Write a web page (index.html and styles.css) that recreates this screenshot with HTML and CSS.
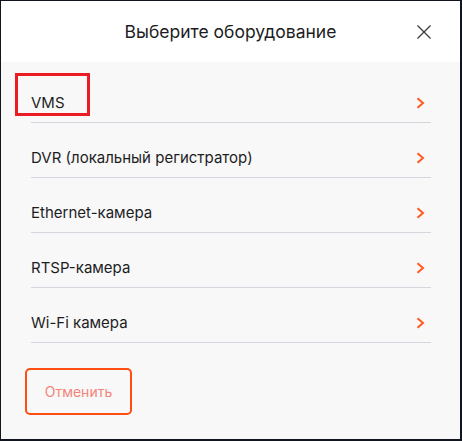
FILE: index.html
```html
<!DOCTYPE html>
<html lang="ru">
<head>
<meta charset="utf-8">
<title>Выберите оборудование</title>
<link rel="stylesheet" href="styles.css">
</head>
<body>
<div class="window">
  <header class="header">
    <span></span>
    <h1 class="title">Выберите оборудование</h1>
    <button class="close" aria-label="Закрыть">
      <svg width="14" height="14" viewBox="0 0 14 14"><path d="M0.5 0.5 L13.5 13.5 M13.5 0.5 L0.5 13.5" stroke="#3a3a3a" stroke-width="1.3" fill="none"/></svg>
    </button>
  </header>
  <main class="content">
    <ul class="list">
      <li class="row"><span class="label highlighted">VMS</span><svg class="chev" width="9" height="12" viewBox="0 0 9 12"><path d="M1.5 1.2 L7 6 L1.5 10.8" stroke="#ff5a1f" stroke-width="2" fill="none"/></svg></li>
      <li class="row"><span class="label">DVR (локальный регистратор)</span><svg class="chev" width="9" height="12" viewBox="0 0 9 12"><path d="M1.5 1.2 L7 6 L1.5 10.8" stroke="#ff5a1f" stroke-width="2" fill="none"/></svg></li>
      <li class="row"><span class="label">Ethernet-камера</span><svg class="chev" width="9" height="12" viewBox="0 0 9 12"><path d="M1.5 1.2 L7 6 L1.5 10.8" stroke="#ff5a1f" stroke-width="2" fill="none"/></svg></li>
      <li class="row"><span class="label">RTSP-камера</span><svg class="chev" width="9" height="12" viewBox="0 0 9 12"><path d="M1.5 1.2 L7 6 L1.5 10.8" stroke="#ff5a1f" stroke-width="2" fill="none"/></svg></li>
      <li class="row"><span class="label">Wi-Fi камера</span><svg class="chev" width="9" height="12" viewBox="0 0 9 12"><path d="M1.5 1.2 L7 6 L1.5 10.8" stroke="#ff5a1f" stroke-width="2" fill="none"/></svg></li>
    </ul>
    <div class="footer">
      <button class="cancel">Отменить</button>
    </div>
  </main>
</div>
</body>
</html>
```
FILE: styles.css
```css
html, body {
  margin: 0;
  padding: 0;
  background: #f8f8f8;
}
.window {
  width: 462px;
  height: 441px;
  box-sizing: border-box;
  border: 1px solid #11151d;
  border-right-width: 2px;
  border-bottom-width: 2px;
  display: flex;
  flex-direction: column;
  font-family: Inter, "Liberation Sans", sans-serif;
  color: #1d1d1f;
  background: #f8f8f8;
}
.header {
  height: 61px;
  flex: none;
  background: #ffffff;
  display: grid;
  grid-template-columns: 1fr auto 1fr;
  align-items: center;
}
.title {
  margin: 0;
  font-size: 17.5px;
  font-weight: 400;
  line-height: 20px;
  padding-top: 1px;
  color: #1d1d1f;
}
.close {
  justify-self: end;
  margin-right: 29px;
  width: 14px;
  height: 14px;
  padding: 0;
  border: 0;
  background: none;
  display: flex;
  margin-top: 1px;
}
.content {
  flex: 1;
  display: flex;
  flex-direction: column;
}
.list {
  list-style: none;
  margin: 0;
  padding: 6px 29px 0 30px;
}
.row {
  height: 55px;
  box-sizing: border-box;
  padding-top: 15px;
  border-bottom: 1px solid #d6d6de;
  display: flex;
  align-items: center;
  justify-content: space-between;
  font-size: 15px;
  line-height: 20px;
}
.label {
  position: relative;
}
.highlighted::before {
  content: "";
  position: absolute;
  left: -16px;
  top: -20px;
  width: 69px;
  height: 37px;
  border: 3px solid #ec1c24;
}
.chev {
  margin-right: 6px;
}
.footer {
  padding: 25px 0 0 24px;
}
.cancel {
  width: 107px;
  height: 47px;
  box-sizing: border-box;
  border: 2px solid #ff4e12;
  border-radius: 5px;
  background: transparent;
  font-family: Inter, "Liberation Sans", sans-serif;
  font-size: 14px;
  color: #f5837a;
  padding: 0;
}
```
